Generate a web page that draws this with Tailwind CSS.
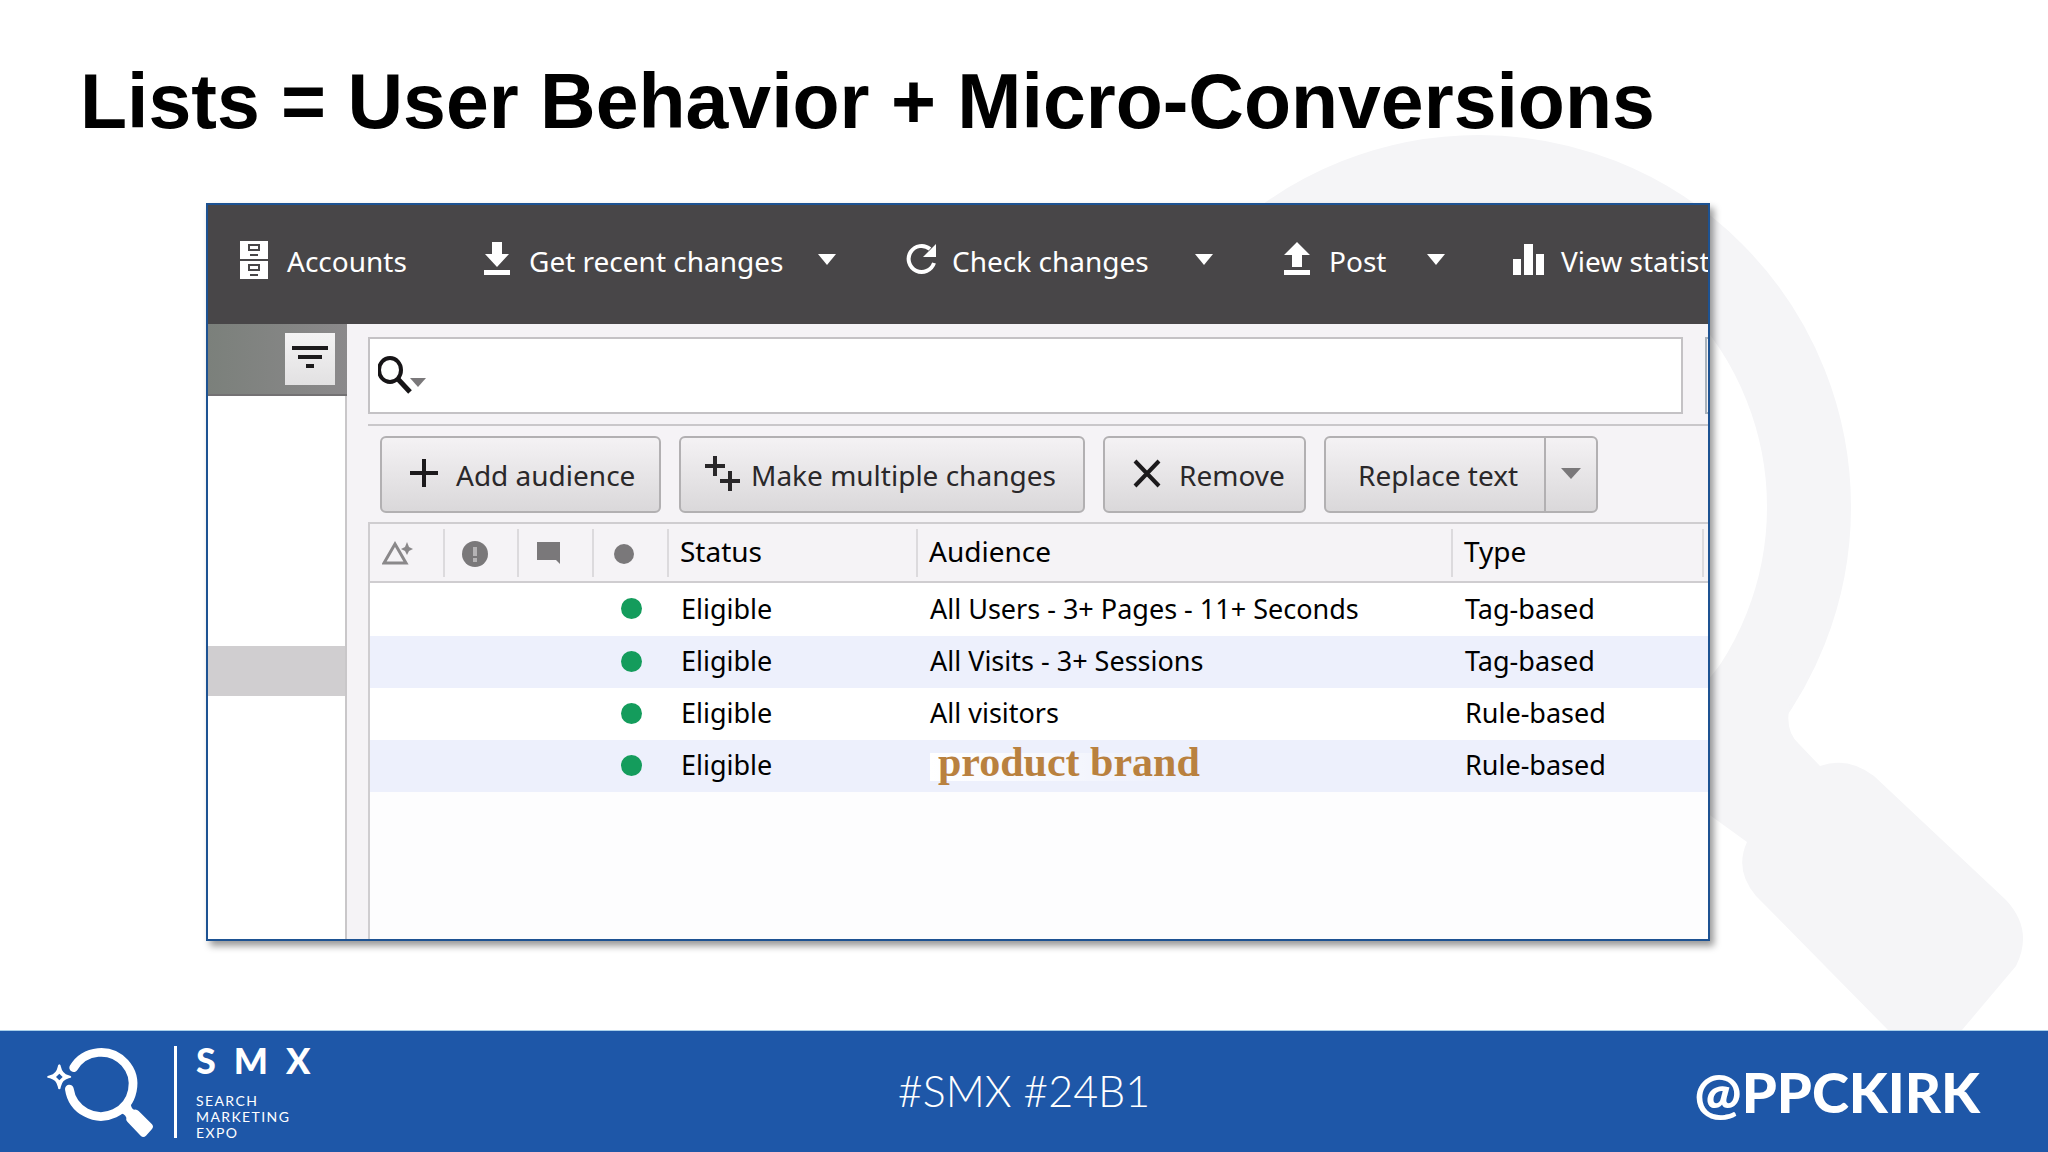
<!DOCTYPE html>
<html lang="en">
<head>
    <meta charset="UTF-8">
    <meta name="viewport" content="width=device-width, initial-scale=1.0">
    <title>Lists = User Behavior + Micro-Conversions</title>
    <script src="https://cdn.jsdelivr.net/npm/@tailwindcss/browser@4"></script>
</head>
<body class="relative flex min-h-screen flex-col bg-white font-['Noto_Sans',sans-serif] text-black">

    <!-- Watermark -->
    <svg class="absolute top-0 right-0 h-[1030px] w-[1048px] text-[#f5f5f7]" viewBox="1000 0 1048 1030" aria-hidden="true">
        <circle cx="1479" cy="507" r="330" fill="none" stroke="currentColor" stroke-width="84" />
        <path fill="currentColor" d="M1812 660 Q1800 680 1790 704 Q1784 730 1799 744 L1820 766 Q1848 756 1874 776 L2006 900 Q2034 930 2016 966 L1962 1030 L1888 1030 L1756 896 Q1734 870 1747 842 L1700 808 L1660 740 L1740 640 Z" />
    </svg>

    <!-- Slide content -->
    <main class="relative flex flex-1 flex-col">
        <h1 class="mt-14 ml-20 font-['Liberation_Sans',sans-serif] text-[77px] leading-[90px] font-bold">Lists = User Behavior + Micro-Conversions</h1>

        <section class="mt-[57px] mr-[338px] mb-[89px] ml-[206px] flex flex-1 flex-col overflow-hidden border-2 border-[#1d5292] bg-white shadow-[4px_5px_7px_rgba(0,0,0,0.4)]">

            <!-- Toolbar -->
            <nav class="grid h-[119px] shrink-0 grid-cols-[242px_423px_377px_232px_1fr] bg-[#484648] pb-2 pl-[31px] text-[28px] text-white">
                <button type="button" class="flex items-center gap-4 whitespace-nowrap">
                    <svg class="h-10 w-8 shrink-0" viewBox="0 0 32 40" fill="none">
                        <path fill="#fff" d="M1 0h28v18H1zM1 20h28v18H1z" />
                        <path stroke="#484648" stroke-width="2" d="M10 4h10v5H10zM11 14h8M10 24h10v5H10zM11 34h8" />
                    </svg>
                    Accounts
                </button>
                <div class="flex items-center justify-between pr-[68px]">
                    <button type="button" class="flex items-center gap-4 whitespace-nowrap">
                        <svg class="h-10 w-8 shrink-0" viewBox="0 0 32 40" fill="#fff"><path d="M11 1h10v12h7L16 26 4 13h7zM3 29h26v5H3z" /></svg>
                        Get recent changes
                    </button>
                    <button type="button" aria-label="Get recent changes options"><svg class="h-6 w-[18px]" viewBox="0 0 18 24" fill="#fff"><path d="M0 5h18L9 16z" /></svg></button>
                </div>
                <div class="flex items-center justify-between pr-[68px]">
                    <button type="button" class="flex items-center gap-4 whitespace-nowrap">
                        <svg class="h-10 w-8 shrink-0" viewBox="0 0 32 40" fill="none">
                            <path stroke="#fff" stroke-width="4" d="M26 8A13 13 0 1 0 30 22" />
                            <path fill="#fff" d="M32 3v13H19z" />
                        </svg>
                        Check changes
                    </button>
                    <button type="button" aria-label="Check changes options"><svg class="h-6 w-[18px]" viewBox="0 0 18 24" fill="#fff"><path d="M0 5h18L9 16z" /></svg></button>
                </div>
                <div class="flex items-center justify-between pr-[68px]">
                    <button type="button" class="flex items-center gap-4 whitespace-nowrap">
                        <svg class="h-10 w-8 shrink-0" viewBox="0 0 32 40" fill="#fff"><path d="M16 1 29 14h-8v12H11V14H3zM3 29h26v5H3z" /></svg>
                        Post
                    </button>
                    <button type="button" aria-label="Post options"><svg class="h-6 w-[18px]" viewBox="0 0 18 24" fill="#fff"><path d="M0 5h18L9 16z" /></svg></button>
                </div>
                <button type="button" class="flex items-center gap-4 overflow-hidden whitespace-nowrap">
                    <svg class="h-10 w-8 shrink-0" viewBox="0 0 32 40" fill="#fff"><path d="M0 18h8v16H0zM11 3h9v31h-9zM23 13h8v21h-8z" /></svg>
                    View statist
                </button>
            </nav>

            <div class="flex flex-1">
                <!-- Account tree -->
                <aside class="flex w-[139px] shrink-0 flex-col">
                    <div class="flex h-[72px] items-start justify-end border-b-2 border-[#737173] bg-linear-to-r from-[#7b807b] to-[#8b898b] pt-[9px] pr-3">
                        <button type="button" aria-label="Filter" class="flex h-[52px] w-[50px] justify-center bg-linear-to-b from-[#f4f3f4] to-[#e2e1e2]">
                            <svg class="h-[52px] w-9" viewBox="0 0 36 52" fill="none" stroke="#1c1a1c" stroke-width="4"><path d="M0 15h36M6 24h24M14 33h8" /></svg>
                        </button>
                    </div>
                    <div class="flex-1 border-r-2 border-[#c9c7c9] pt-[250px]">
                        <div class="h-[50px] bg-[#d0ced0]"></div>
                    </div>
                </aside>

                <div class="flex min-w-0 flex-1 flex-col bg-[#f5f3f6] pt-[13px] pl-[21px]">
                    <!-- Search -->
                    <div class="flex justify-between gap-[22px]">
                        <label class="flex h-[77px] flex-1 items-center border-2 border-[#c4c2c5] bg-white pl-2">
                            <svg class="h-10 w-[50px] shrink-0" viewBox="0 0 50 40" fill="none">
                                <ellipse cx="12" cy="14" rx="11" ry="12" stroke="#161416" stroke-width="4" />
                                <path stroke="#161416" stroke-width="5" d="M19 22 32 36" />
                                <path fill="#7a787a" d="M32 22h16l-8 9z" />
                            </svg>
                            <input type="search" aria-label="Search" class="h-full min-w-0 flex-1 bg-transparent px-2 text-[28px] outline-none">
                        </label>
                        <div class="w-[3px] border-2 border-r-0 border-[#a9b2bb]"></div>
                    </div>

                    <!-- Actions -->
                    <div class="mt-[10px] flex gap-[18px] border-t-2 border-[#c9c7ca] pt-[10px] pb-[9px] pl-3 text-[28px] whitespace-nowrap text-[#2a282a]">
                        <button type="button" class="flex h-[77px] w-[281px] items-center gap-[18px] rounded-md border-2 border-[#b2b0b2] bg-linear-to-b from-[#f4f2f4] to-[#dad8da] pl-7">
                            <svg class="h-10 w-7" viewBox="0 0 28 40" stroke="#1c1a1c" stroke-width="4"><path d="M0 18h28M14 4v28" /></svg>
                            Add audience
                        </button>
                        <button type="button" class="flex h-[77px] w-[406px] items-center gap-2.5 rounded-md border-2 border-[#b2b0b2] bg-linear-to-b from-[#f4f2f4] to-[#dad8da] pl-6">
                            <svg class="h-10 w-9" viewBox="0 0 36 40" stroke="#2a282a" stroke-width="4"><path d="M0 11h20M10 1v20M15 26h20M25 16v20" /></svg>
                            Make multiple changes
                        </button>
                        <button type="button" class="flex h-[77px] w-[203px] items-center gap-[18px] rounded-md border-2 border-[#b2b0b2] bg-linear-to-b from-[#f4f2f4] to-[#dad8da] pl-7">
                            <svg class="h-10 w-7" viewBox="0 0 28 40" stroke="#1c1a1c" stroke-width="4"><path d="M2 6 26 31M26 6 2 31" /></svg>
                            Remove
                        </button>
                        <div class="flex h-[77px] rounded-md border-2 border-[#b2b0b2] bg-linear-to-b from-[#f4f2f4] to-[#dad8da]">
                            <button type="button" class="w-[218px] pl-8 text-left">Replace text</button>
                            <button type="button" aria-label="Replace text options" class="flex w-[52px] items-center justify-center border-l-2 border-[#b2b0b2]">
                                <svg class="h-6 w-5" viewBox="0 0 20 24" fill="#7a787a"><path d="M0 5h20l-10 11z" /></svg>
                            </button>
                        </div>
                    </div>

                    <!-- Audience lists -->
                    <div class="flex-1 border-t-2 border-l-2 border-[#cfcdd0] bg-[#fdfdfe]">
                        <table class="w-full table-fixed border-collapse text-left text-[27px] leading-9 whitespace-nowrap">
                            <colgroup>
                                <col class="w-[75px]">
                                <col class="w-[74px]">
                                <col class="w-[75px]">
                                <col class="w-[75px]">
                                <col class="w-[249px]">
                                <col>
                                <col class="w-[251px]">
                                <col class="w-[4px]">
                            </colgroup>
                            <thead class="border-b-2 border-[#cfcdd0] bg-[#f5f3f6] text-[28px]">
                                <tr class="h-[58px]">
                                    <th scope="col" aria-label="Edits" class="p-0">
                                        <div class="flex h-12 items-center border-r-2 border-[#dcdadd] pl-3">
                                            <svg class="h-7 w-8" viewBox="0 0 32 28" fill="none">
                                                <path stroke="#8a888a" stroke-width="3" d="M13 5 24 24H2z" />
                                                <path fill="#8a888a" d="M25 3l2 5 4 2-4 2-2 4-2-4-4-2 4-2z" />
                                            </svg>
                                        </div>
                                    </th>
                                    <th scope="col" aria-label="Errors" class="p-0">
                                        <div class="flex h-12 items-center border-r-2 border-[#dcdadd] pl-4">
                                            <svg class="h-7 w-7" viewBox="0 0 28 28">
                                                <circle cx="14" cy="15" r="13" fill="#7a787a" />
                                                <path stroke="#b5b3b5" stroke-width="4" d="M14 8v9M14 19v4" />
                                            </svg>
                                        </div>
                                    </th>
                                    <th scope="col" aria-label="Comments" class="p-0">
                                        <div class="flex h-12 items-center border-r-2 border-[#dcdadd] pl-[18px]">
                                            <svg class="h-7 w-6" viewBox="0 0 24 28" fill="#7a787a"><path d="M0 3h23v22l-4-4H0z" /></svg>
                                        </div>
                                    </th>
                                    <th scope="col" aria-label="State" class="p-0">
                                        <div class="flex h-12 items-center border-r-2 border-[#dcdadd] pl-5">
                                            <svg class="h-7 w-5" viewBox="0 0 20 28" fill="#7a787a"><circle cx="10" cy="15" r="10" /></svg>
                                        </div>
                                    </th>
                                    <th scope="col" class="p-0 font-normal"><div class="flex h-12 items-center border-r-2 border-[#dcdadd] pb-1 pl-[11px]">Status</div></th>
                                    <th scope="col" class="p-0 font-normal"><div class="flex h-12 items-center border-r-2 border-[#dcdadd] pb-1 pl-[11px]">Audience</div></th>
                                    <th scope="col" class="p-0 font-normal"><div class="flex h-12 items-center border-r-2 border-[#dcdadd] pb-1 pl-[11px]">Type</div></th>
                                    <td class="p-0"></td>
                                </tr>
                            </thead>
                            <tbody>
                                <tr class="h-[54px] bg-white">
                                    <td colspan="3" class="p-0"></td>
                                    <td class="p-0 pb-0.5"><div class="ml-[27px] size-[21px] rounded-full bg-[#149c5c]"></div></td>
                                    <td class="p-0 pb-0.5 pl-3">Eligible</td>
                                    <td class="p-0 pb-0.5 pl-3">All Users - 3+ Pages - 11+ Seconds</td>
                                    <td class="p-0 pb-0.5 pl-3">Tag-based</td>
                                    <td class="p-0"></td>
                                </tr>
                                <tr class="h-[52px] bg-[#edf0fc]">
                                    <td colspan="3" class="p-0"></td>
                                    <td class="p-0 pb-0.5"><div class="ml-[27px] size-[21px] rounded-full bg-[#149c5c]"></div></td>
                                    <td class="p-0 pb-0.5 pl-3">Eligible</td>
                                    <td class="p-0 pb-0.5 pl-3">All Visits - 3+ Sessions</td>
                                    <td class="p-0 pb-0.5 pl-3">Tag-based</td>
                                    <td class="p-0"></td>
                                </tr>
                                <tr class="h-[52px] bg-white">
                                    <td colspan="3" class="p-0"></td>
                                    <td class="p-0 pb-0.5"><div class="ml-[27px] size-[21px] rounded-full bg-[#149c5c]"></div></td>
                                    <td class="p-0 pb-0.5 pl-3">Eligible</td>
                                    <td class="p-0 pb-0.5 pl-3">All visitors</td>
                                    <td class="p-0 pb-0.5 pl-3">Rule-based</td>
                                    <td class="p-0"></td>
                                </tr>
                                <tr class="h-[52px] bg-[#edf0fc]">
                                    <td colspan="3" class="p-0"></td>
                                    <td class="p-0 pb-0.5"><div class="ml-[27px] size-[21px] rounded-full bg-[#149c5c]"></div></td>
                                    <td class="p-0 pb-0.5 pl-3">Eligible</td>
                                    <td class="p-0 pb-1 pl-3"><span class="bg-linear-to-r from-white to-transparent bg-[length:90%_28px] bg-[position:0_14px] bg-no-repeat pr-1 pl-2 font-['Liberation_Serif',serif] text-[42px] font-bold text-[#b9813f]">product brand</span></td>
                                    <td class="p-0 pb-0.5 pl-3">Rule-based</td>
                                    <td class="p-0"></td>
                                </tr>
                            </tbody>
                        </table>
                    </div>
                </div>
            </div>
        </section>
    </main>

    <!-- Footer -->
    <footer class="relative grid h-[122px] shrink-0 grid-cols-3 items-center border-t border-[#a9cfea] bg-[#1e57a8] font-[Lato,sans-serif] text-white">
        <div class="flex items-center pl-[46px]">
            <svg class="h-[94px] w-[108px]" viewBox="48 70 324 282" fill="none" role="img" aria-label="SMX logo">
                <path stroke="#fff" stroke-width="26" stroke-linecap="round" d="M131 138A96 96 0 1 1 118 202" />
                <path fill="#fff" d="M270 274 303 246Q302 258 312 264 320 262 326 268L366 308Q372 315 366 322L348 342Q340 350 332 342L292 300Q287 295 289 288 284 276 270 274z" />
                <path fill="#fff" fill-rule="evenodd" d="M88 128Q92 128 93 136 97 156 116 161 124 163 124 166T116 170Q97 175 93 194 92 203 88 203T83 194Q79 175 60 170 51 169 51 166T60 161Q79 156 83 136 84 128 88 128zM88 156 78 166 88 176 98 166z" />
            </svg>
            <div class="ml-5 h-[92px] w-[3px] bg-white"></div>
            <div class="ml-[19px]">
                <div class="flex gap-[18px] text-[36px] leading-[34px] font-black"><span>S</span><span>M</span><span>X</span></div>
                <div class="mt-4 text-sm leading-4 tracking-widest">SEARCH<br>MARKETING<br>EXPO</div>
            </div>
        </div>
        <p class="text-center text-[43px] font-light">#SMX #24B1</p>
        <p class="pr-[68px] text-right text-[56px] leading-[72px] font-black">@PPCKIRK</p>
    </footer>

</body>
</html>
